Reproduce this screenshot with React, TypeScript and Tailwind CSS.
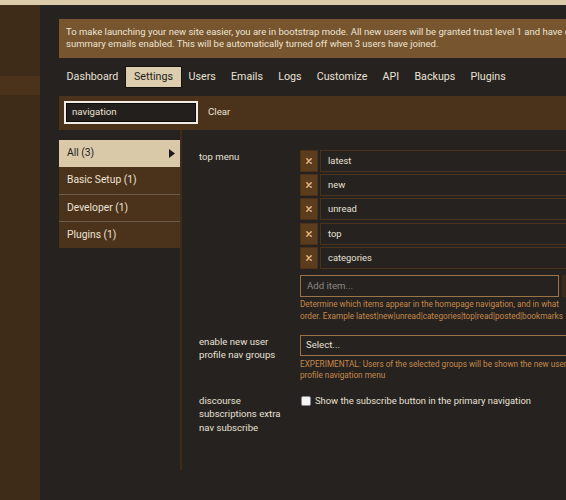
import React from "react";

const navItems = ["Dashboard", "Settings", "Users", "Emails", "Logs", "Customize", "API", "Backups", "Plugins"];
const categories = [
  { name: "All (3)", active: true },
  { name: "Basic Setup (1)" },
  { name: "Developer (1)" },
  { name: "Plugins (1)" },
];
const topMenu = ["latest", "new", "unread", "top", "categories"];

function RemoveIcon() {
  return (
    <svg width="6" height="6" viewBox="0 0 6 6" fill="none">
      <path d="M0.8 0.8 L5.2 5.2 M5.2 0.8 L0.8 5.2" stroke="#e8b57e" strokeWidth="1.5" strokeLinecap="round" />
    </svg>
  );
}

function Label({ children }: { children: React.ReactNode }) {
  return (
    <div className="w-[101px] shrink-0 pr-[12px] text-[9.6px] leading-[13.3px] text-[#e8e0d4]">{children}</div>
  );
}

export default function App() {
  return (
    <div
      className="flex h-[500px] w-[566px] flex-col overflow-hidden bg-[#252220]"
      style={{ fontFamily: "Roboto, 'Liberation Sans', sans-serif" }}
    >
      <div className="h-[5px] shrink-0 bg-[#dbcba9]" />
      <div className="flex min-h-0 flex-1">
        {/* site sidebar */}
        <aside className="flex w-[40px] shrink-0 flex-col bg-[#3e2b18]">
          <div className="h-[71px]" />
          <div className="h-[19px] bg-[#4b331b]" />
        </aside>

        <main className="min-w-0 flex-1 pl-[19px] pt-[14px]">
          <div className="w-[560px]">
            {/* bootstrap notice */}
            <div className="h-[39px] whitespace-nowrap bg-[#76552f] px-[7px] pt-[6.5px] text-[9.5px] leading-[12.5px] text-[#efe4d2]">
              To make launching your new site easier, you are in bootstrap mode. All new users will be granted trust level 1 and have daily
              <br />
              summary emails enabled. This will be automatically turned off when 3 users have joined.
            </div>

            {/* admin tabs */}
            <nav className="mt-[9px] flex h-[20px] items-stretch text-[10.7px] text-[#e9e1d5]">
              {navItems.map((item) =>
                item === "Settings" ? (
                  <span
                    key={item}
                    className="flex items-center bg-[#dccdae] px-[8px] text-[#231e1a] shadow-[0_0_0_1px_#15120f]"
                  >
                    {item}
                  </span>
                ) : (
                  <span key={item} className="flex items-center px-[7.6px]">
                    {item}
                  </span>
                )
              )}
            </nav>

            {/* filter bar */}
            <div className="mt-[8.7px] flex h-[34px] items-center bg-[#4b321a] pl-[5px]">
              <div className="flex h-[23px] w-[134px] items-center border-2 border-[#f1ede6] bg-[#231f1c] pl-[6px] text-[9.7px] text-[#e8e0d4] shadow-[inset_0_0_0_1px_#0f0d0b]">
                navigation
              </div>
              <span className="ml-[10px] text-[9.7px] text-[#e8e0d4]">Clear</span>
            </div>

            <div className="flex">
              {/* category list */}
              <div className="w-[123px] shrink-0 border-r-2 border-[#3f2b17] pt-[10px]">
                {categories.map((c, i) =>
                  c.active ? (
                    <div
                      key={c.name}
                      className="flex h-[27px] items-center justify-between bg-[#d9c9a9] pl-[8px] pr-[5px] text-[10.3px] text-[#231e1a]"
                    >
                      <span>{c.name}</span>
                      <svg width="6" height="9" viewBox="0 0 6 9">
                        <path d="M0 0 L6 4.5 L0 9 Z" fill="#1c1916" />
                      </svg>
                    </div>
                  ) : (
                    <div
                      key={c.name}
                      className={`flex h-[27px] items-center bg-[#4b321a] pl-[8px] text-[10.3px] text-[#ece3d6] ${
                        i > 1 ? "border-t border-[#6a5b4c]" : ""
                      }`}
                    >
                      {c.name}
                    </div>
                  )
                )}
              </div>

              {/* settings */}
              <div className="min-w-0 flex-1 pb-[36px] pl-[17px] pt-[20px]">
                <div className="flex">
                  <Label>top menu</Label>
                  <div className="w-[300px] shrink-0">
                    <div className="flex flex-col gap-[2.4px]">
                      {topMenu.map((v) => (
                        <div key={v} className="flex h-[22px] gap-[2px]">
                          <div className="flex w-[18px] items-center justify-center border border-[#4a3118] bg-[#5b3d1d]">
                            <RemoveIcon />
                          </div>
                          <div className="flex flex-1 items-center border border-[#4a331c] bg-[#252220] pl-[7px] text-[9.4px] text-[#e8e0d4]">
                            {v}
                          </div>
                        </div>
                      ))}
                    </div>
                    <div className="mt-[5.6px] flex h-[22px] gap-[2.5px]">
                      <div className="flex w-[259px] items-center border border-[#9a7446] bg-[#252220] pl-[6px] text-[9.6px] text-[#8d8882]">
                        Add item...
                      </div>
                      <div className="flex-1 bg-[#3b2a1a]" />
                    </div>
                    <div className="mt-[2.3px] whitespace-nowrap text-[8.2px] leading-[11.7px] text-[#c5894a]">
                      Determine which items appear in the homepage navigation, and in what
                      <br />
                      order. Example latest|new|unread|categories|top|read|posted|bookmarks
                    </div>
                  </div>
                </div>

                <div className="mt-[12.2px] flex">
                  <Label>
                    enable new user
                    <br />
                    profile nav groups
                  </Label>
                  <div className="w-[300px] shrink-0">
                    <div className="flex h-[21px] items-center border border-[#9a7446] bg-[#252220] pl-[5px] text-[9.6px] text-[#e8e0d4]">
                      Select...
                    </div>
                    <div className="mt-[2.8px] whitespace-nowrap text-[8.2px] leading-[11.3px] text-[#c5894a]">
                      EXPERIMENTAL: Users of the selected groups will be shown the new user
                      <br />
                      profile navigation menu
                    </div>
                  </div>
                </div>

                <div className="mt-[13px] flex">
                  <Label>
                    discourse
                    <br />
                    subscriptions extra
                    <br />
                    nav subscribe
                  </Label>
                  <div className="flex h-[13.3px] w-[300px] shrink-0 items-center gap-[4px]">
                    <span className="ml-[1px] h-[10px] w-[10px] rounded-[2px] border border-[#8a8a8a] bg-[#f5f5f5]" />
                    <span className="text-[9.4px] text-[#e8e0d4]">Show the subscribe button in the primary navigation</span>
                  </div>
                </div>
              </div>
            </div>
          </div>
        </main>
      </div>
    </div>
  );
}
